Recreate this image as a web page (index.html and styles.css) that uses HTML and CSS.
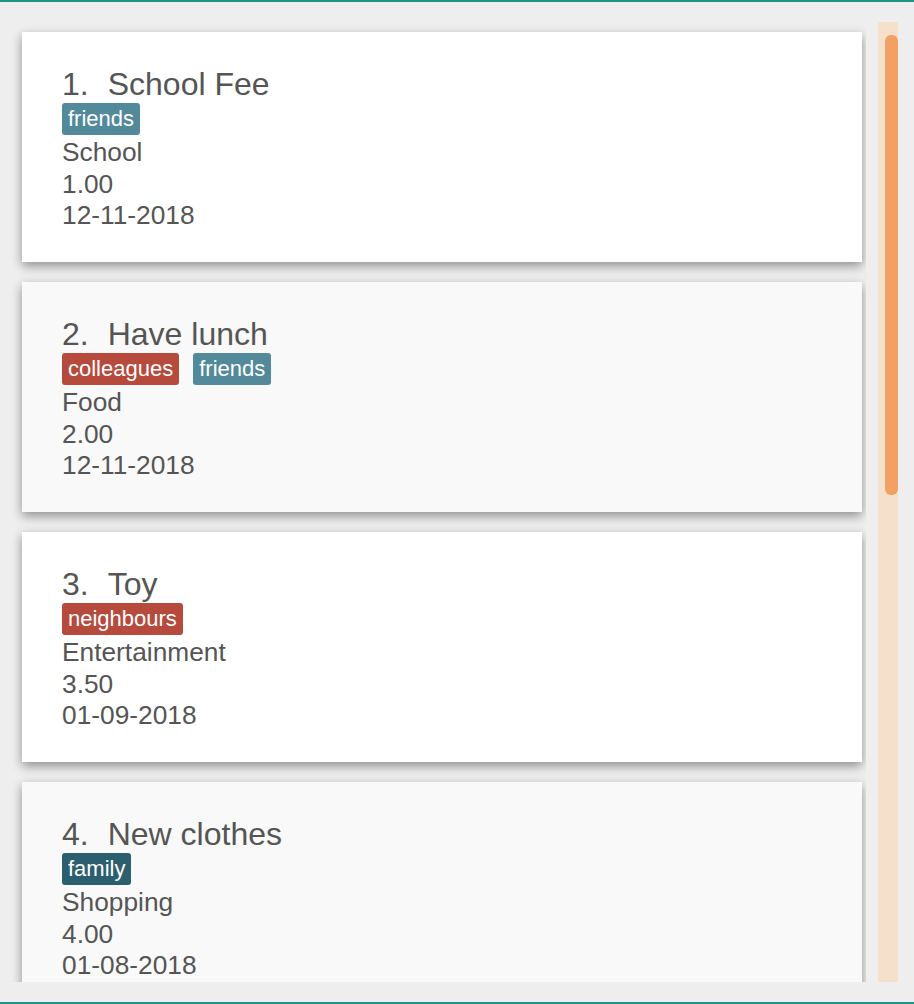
FILE: index.html
```html
<!DOCTYPE html>
<html>
<head>
<meta charset="utf-8">
<link rel="stylesheet" href="styles.css">
</head>
<body>
<div class="frame">
  <div class="viewport">
    <div class="list">
      <div class="card">
        <div class="title"><span class="idx">1.</span><span>School Fee</span></div>
        <div class="tags"><span class="tag friends">friends</span></div>
        <div class="line">School</div>
        <div class="line">1.00</div>
        <div class="line">12-11-2018</div>
      </div>
      <div class="card alt">
        <div class="title"><span class="idx">2.</span><span>Have lunch</span></div>
        <div class="tags"><span class="tag red">colleagues</span><span class="tag friends">friends</span></div>
        <div class="line">Food</div>
        <div class="line">2.00</div>
        <div class="line">12-11-2018</div>
      </div>
      <div class="card">
        <div class="title"><span class="idx">3.</span><span>Toy</span></div>
        <div class="tags"><span class="tag red">neighbours</span></div>
        <div class="line">Entertainment</div>
        <div class="line">3.50</div>
        <div class="line">01-09-2018</div>
      </div>
      <div class="card alt">
        <div class="title"><span class="idx">4.</span><span>New clothes</span></div>
        <div class="tags"><span class="tag family">family</span></div>
        <div class="line">Shopping</div>
        <div class="line">4.00</div>
        <div class="line">01-08-2018</div>
      </div>
    </div>
    <div class="track"><div class="thumb"></div></div>
  </div>
</div>
</body>
</html>
```
FILE: styles.css
```css
html, body {
  margin: 0;
  padding: 0;
}
body {
  background: #eeeeee;
  font-family: "Liberation Sans", Arial, sans-serif;
  color: #555555;
}
.frame {
  box-sizing: border-box;
  height: 1004px;
  border-top: 2px solid #1f9482;
  border-bottom: 2px solid #1f9482;
  padding-top: 20px;
}
.viewport {
  display: flex;
  height: 960px;
}
.list {
  width: 866px;
  overflow: hidden;
  padding: 10px 0 0 22px;
  box-sizing: border-box;
  display: flex;
  flex-direction: column;
  gap: 20px;
}
.card {
  flex: 0 0 auto;
  box-sizing: border-box;
  width: 840px;
  height: 230px;
  background: #ffffff;
  padding: 34px 40px 0 40px;
  box-shadow: 0 4px 10px rgba(0, 0, 0, 0.4);
}
.card.alt {
  background: #f9f9f9;
}
.title {
  display: flex;
  gap: 19px;
  font-size: 32px;
  line-height: 37px;
}
.tags {
  display: flex;
  gap: 14px;
  margin-bottom: 2px;
}
.tag {
  height: 32px;
  line-height: 32px;
  font-size: 22px;
  padding: 0 6px;
  color: #ffffff;
  border-radius: 3px;
  box-sizing: border-box;
}
.tag.friends { background: #528a9c; }
.tag.red { background: #b54a3d; }
.tag.family { background: #2b5e6e; }
.line {
  font-size: 26.3px;
  line-height: 31.5px;
}
.track {
  margin-left: 12px;
  width: 20px;
  height: 960px;
  background: #f5e1cb;
  box-sizing: border-box;
  padding: 13px 0 0 7px;
}
.thumb {
  width: 13px;
  height: 460px;
  background: #f2a063;
  border-radius: 6px;
}
```
